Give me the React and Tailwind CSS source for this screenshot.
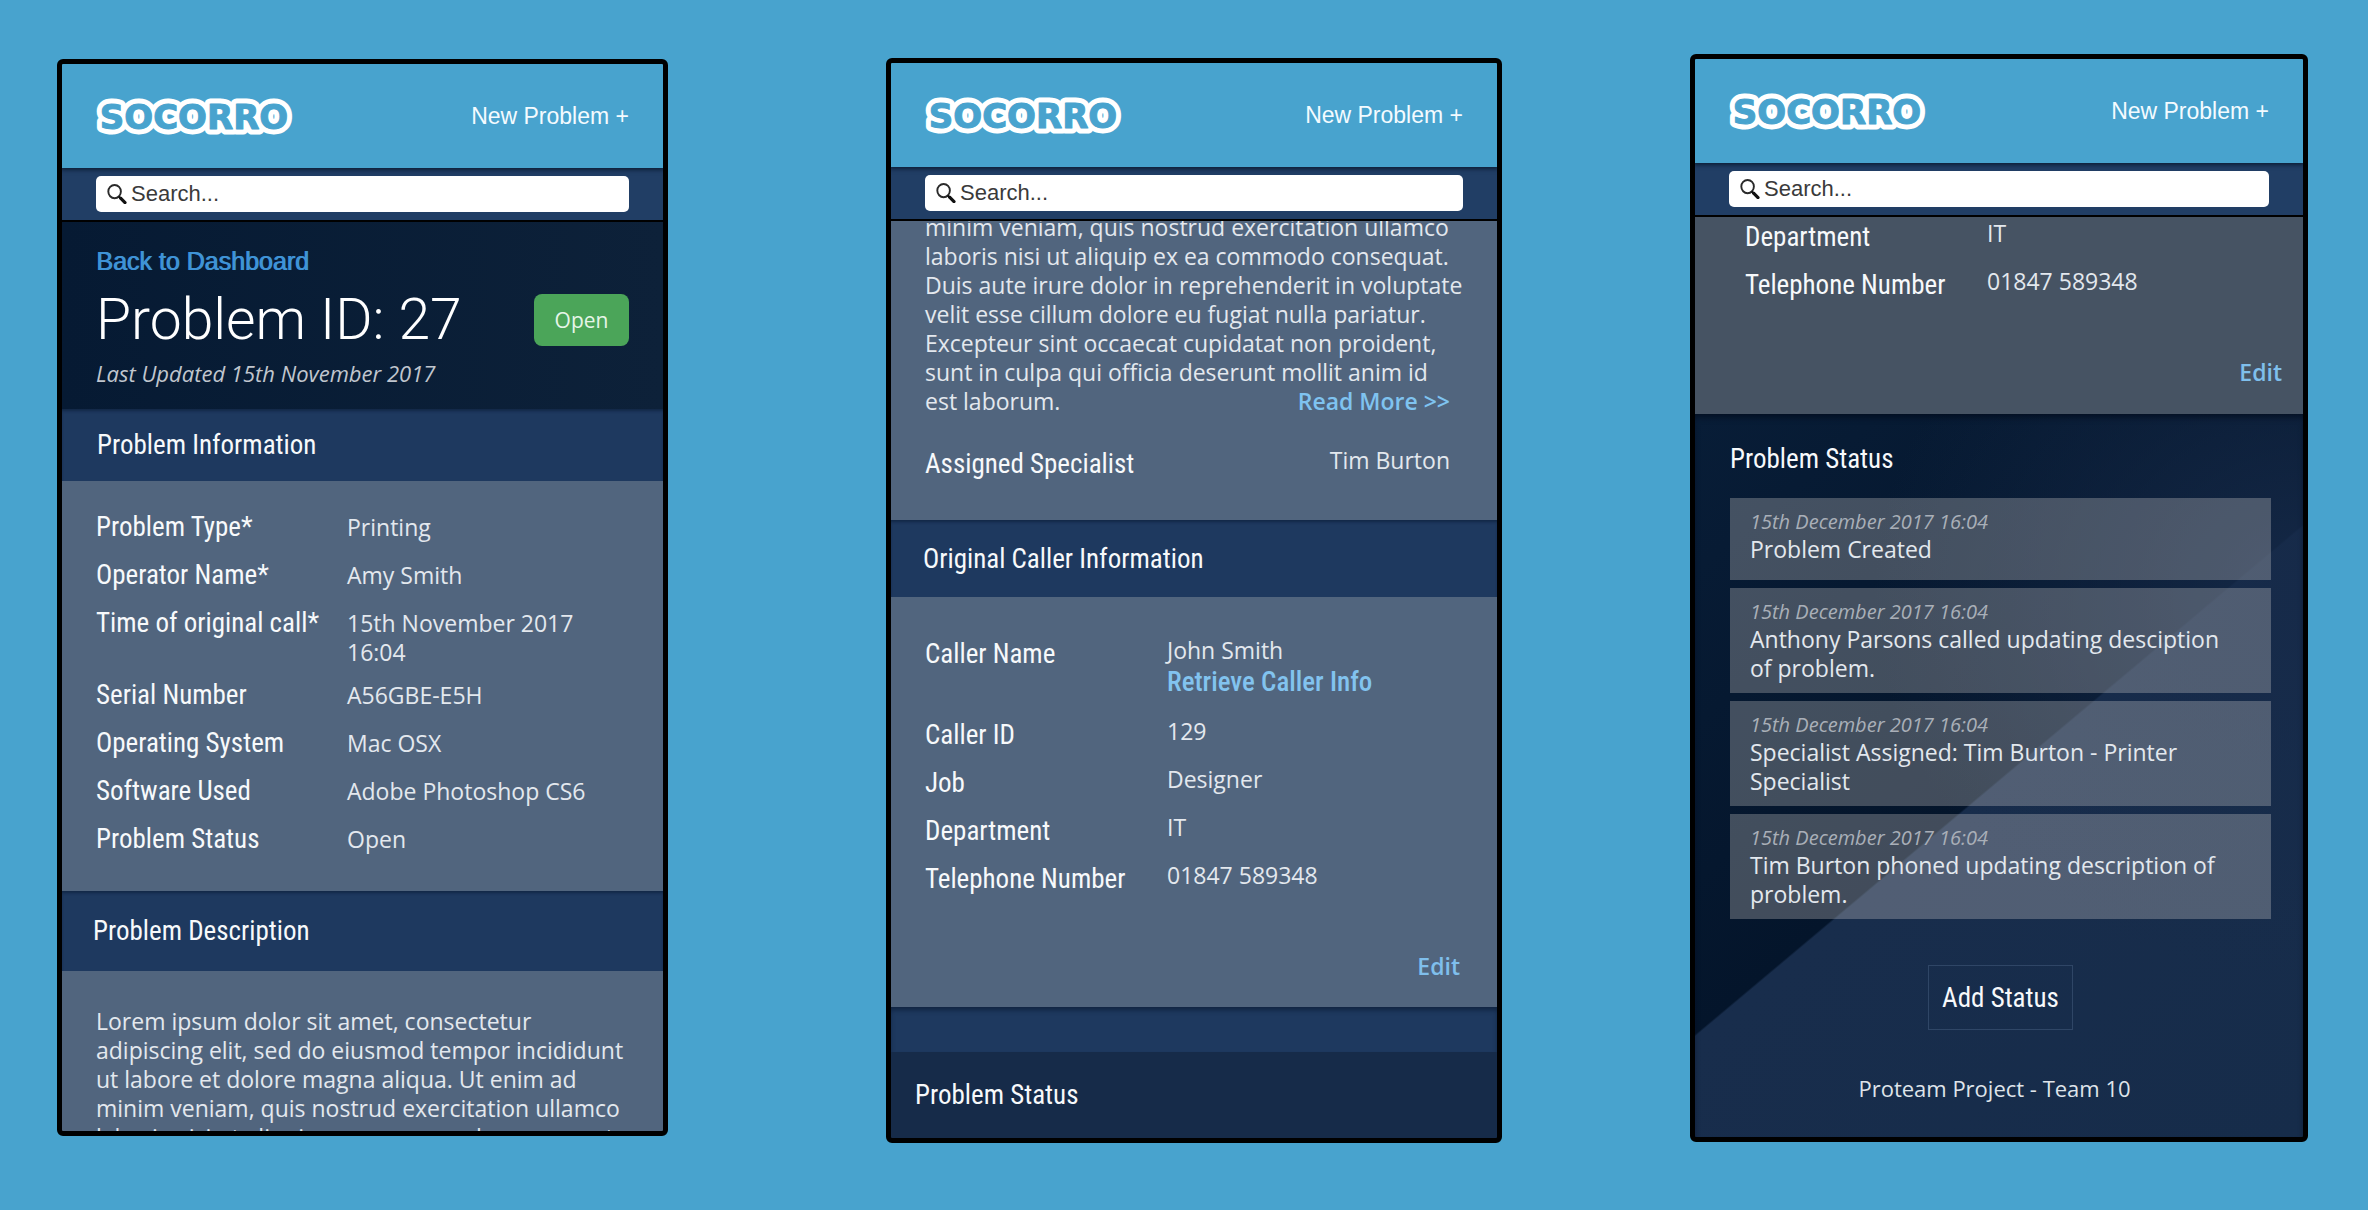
import React, { useId } from "react";

const problemRows = [
  ["Problem Type*", "Printing"],
  ["Operator Name*", "Amy Smith"],
  ["Time of original call*", "15th November 2017 16:04"],
  ["Serial Number", "A56GBE-E5H"],
  ["Operating System", "Mac OSX"],
  ["Software Used", "Adobe Photoshop CS6"],
  ["Problem Status", "Open"],
];

const callerRows = [
  ["Caller Name", "John Smith", "Retrieve Caller Info"],
  ["Caller ID", "129"],
  ["Job", "Designer"],
  ["Department", "IT"],
  ["Telephone Number", "01847 589348"],
];

const descriptionStart = [
  "Lorem ipsum dolor sit amet, consectetur",
  "adipiscing elit, sed do eiusmod tempor incididunt",
  "ut labore et dolore magna aliqua. Ut enim ad",
  "minim veniam, quis nostrud exercitation ullamco",
  "laboris nisi ut aliquip ex ea commodo consequat.",
];

const descriptionEnd = [
  "minim veniam, quis nostrud exercitation ullamco",
  "laboris nisi ut aliquip ex ea commodo consequat.",
  "Duis aute irure dolor in reprehenderit in voluptate",
  "velit esse cillum dolore eu fugiat nulla pariatur.",
  "Excepteur sint occaecat cupidatat non proident,",
  "sunt in culpa qui officia deserunt mollit anim id",
];

const statuses = [
  "Problem Created",
  "Anthony Parsons called updating desciption of problem.",
  "Specialist Assigned: Tim Burton - Printer Specialist",
  "Tim Burton phoned updating description of problem.",
];

const labelText =
  "font-['Roboto_Condensed','Roboto',sans-serif] text-[27px] leading-10 text-[#f7f9fb]";
const bodyText = "text-[23px] leading-[29px] text-[#e3e8ee]";

function Logo() {
  const wordId = useId();
  return (
    <svg viewBox="0 0 198 38" className="h-[38px] w-[198px]" role="img" aria-label="Socorro">
      <defs>
        <text
          id={wordId}
          x="98"
          y="32"
          textAnchor="middle"
          fontFamily="'DejaVu Sans', sans-serif"
          fontWeight="700"
          fontSize="34"
        >
          SOCORRO
        </text>
      </defs>
      <use href={"#" + wordId} fill="#fff" stroke="#fff" strokeWidth="11" strokeLinejoin="round" />
      <use
        href={"#" + wordId}
        fill="#48a3ce"
        stroke="#48a3ce"
        strokeWidth="1"
        strokeLinejoin="round"
      />
    </svg>
  );
}

function SearchIcon() {
  return (
    <svg viewBox="0 0 20 20" className="size-5 shrink-0" fill="none" aria-hidden="true">
      <ellipse cx="7.6" cy="7.6" rx="6.3" ry="6.6" stroke="#2a2a2a" strokeWidth="1.9" />
      <path d="M11.6 12.4 14 15" stroke="#111" strokeWidth="2" />
      <path d="M13.6 14.2 18 18.6" stroke="#111" strokeWidth="3.2" strokeLinecap="round" />
    </svg>
  );
}

function TopBar({ id }) {
  return (
    <>
      <header className="relative flex h-[104px] shrink-0 items-center justify-between bg-[#48a3ce] px-[34px] shadow-[0_1px_4px_1px_rgba(5,20,40,0.75)]">
        <Logo />
        <a
          href="#new"
          className="font-['Liberation_Sans',sans-serif] text-[23px] leading-7 text-[#f4fbff]"
        >
          New Problem +
        </a>
      </header>
      <div className="shrink-0 border-b-2 border-black bg-[#213e65] px-[34px] py-2">
        <label
          htmlFor={id}
          className="flex h-9 items-center gap-1 rounded-[5px] bg-white pr-2 pl-[11px]"
        >
          <SearchIcon />
          <input
            id={id}
            type="search"
            aria-label="Search"
            placeholder="Search..."
            className="w-full min-w-0 bg-transparent font-['Liberation_Sans',sans-serif] text-[22px] leading-7 text-[#333] outline-none placeholder:text-[#3a3a3a]"
          />
        </label>
      </div>
    </>
  );
}

function Phone({ id, className, children }) {
  return (
    <section
      className={
        "flex min-h-0 min-w-0 flex-col overflow-hidden rounded-md border-[5px] border-black bg-black " +
        className
      }
    >
      <TopBar id={id} />
      <div className="flex min-h-0 grow flex-col overflow-hidden">{children}</div>
    </section>
  );
}

function SectionHead({ className, children }) {
  return (
    <div
      className={
        "flex shrink-0 items-center bg-[#1e395f] shadow-[inset_0_3px_3px_-1px_rgba(6,22,45,0.5)] " +
        className
      }
    >
      <h2 className={labelText}>{children}</h2>
    </div>
  );
}

function CallerList({ rows }) {
  return (
    <dl className="grid grid-cols-[242px_1fr] items-start gap-y-2">
      {rows.map(([label, value, action]) => (
        <React.Fragment key={label}>
          <dt className={labelText}>{label}</dt>
          <dd className={"pt-0.5 " + bodyText}>
            {value}
            {action && (
              <a
                href="#caller"
                className="block pb-2 font-['Roboto_Condensed','Roboto',sans-serif] text-[27px] leading-[34px] font-medium text-[#82c3ef]"
              >
                {action}
              </a>
            )}
          </dd>
        </React.Fragment>
      ))}
    </dl>
  );
}

function EditLink() {
  return (
    <a
      href="#edit"
      className="mt-[53px] block text-right text-[23px] leading-[29px] font-semibold text-[#7fbfec]"
    >
      Edit
    </a>
  );
}

function OverviewPhone() {
  return (
    <Phone id="search-overview" className="col-start-2 mt-[59px] mb-[74px]">
      <div className="shrink-0 bg-linear-to-r from-[#061a33] to-[#0d2139] px-[34px] pt-6 pb-[21px]">
        <a
          href="#dashboard"
          className="block font-['Liberation_Sans',sans-serif] text-[25px] leading-[30px] text-[#3f93d6] [text-shadow:1px_0_0_#3f93d6]"
        >
          Back to Dashboard
        </a>
        <div className="mt-[14px] flex items-center justify-between">
          <h1 className="font-['Roboto',sans-serif] text-[57px] leading-[60px] font-light whitespace-nowrap text-white">
            Problem ID: 27
          </h1>
          <button
            type="button"
            className="h-[52px] w-[95px] rounded-lg bg-[#4ba559] text-[21px] leading-7 text-[#e6f5e8]"
          >
            Open
          </button>
        </div>
        <p className="mt-2 text-[22px] leading-[30px] text-[#c0c6ce] italic">
          Last Updated 15th November 2017
        </p>
      </div>

      <SectionHead className="h-[72px] pl-[35px]">Problem Information</SectionHead>
      <dl className="grid shrink-0 grid-cols-[251px_1fr] items-baseline gap-y-2 bg-[#51657e] pt-[26px] pr-16 pb-8 pl-[34px]">
        {problemRows.map(([label, value]) => (
          <React.Fragment key={label}>
            <dt className={labelText}>{label}</dt>
            <dd className={bodyText}>{value}</dd>
          </React.Fragment>
        ))}
      </dl>

      <SectionHead className="h-20 pl-[31px]">Problem Description</SectionHead>
      <p className={"grow bg-[#51657e] pt-9 pl-[34px] whitespace-nowrap " + bodyText}>
        {descriptionStart.map((line) => (
          <span key={line} className="block">
            {line}
          </span>
        ))}
      </p>
    </Phone>
  );
}

function CallerPhone() {
  return (
    <Phone id="search-caller" className="col-start-4 mt-[58px] mb-[67px]">
      <div className="-mt-2 shrink-0 bg-[#51657e] pr-[47px] pb-9 pl-[34px]">
        <p className={"whitespace-nowrap " + bodyText}>
          {descriptionEnd.map((line) => (
            <span key={line} className="block">
              {line}
            </span>
          ))}
        </p>
        <div className={"flex justify-between " + bodyText}>
          <span>est laborum.</span>
          <a href="#more" className="font-semibold text-[#7fc3f0]">
            Read More &gt;&gt;
          </a>
        </div>
        <div className="mt-7 flex items-start justify-between">
          <h3 className={labelText}>Assigned Specialist</h3>
          <span className={"pt-0.5 " + bodyText}>Tim Burton</span>
        </div>
      </div>

      <SectionHead className="h-[77px] pl-8">Original Caller Information</SectionHead>
      <div className="shrink-0 bg-[#51657e] pt-[37px] pr-[37px] pb-[26px] pl-[34px]">
        <CallerList rows={callerRows} />
        <EditLink />
      </div>

      <div className="h-[45px] shrink-0 bg-[#1e395f] shadow-[inset_0_4px_5px_-1px_rgba(6,22,45,0.6)]" />
      <div className="flex grow items-center bg-[#162b49] pl-6">
        <h2 className={labelText}>Problem Status</h2>
      </div>
    </Phone>
  );
}

function StatusPhone() {
  return (
    <Phone id="search-status" className="col-start-6 mt-[54px] mb-[68px]">
      <div className="shrink-0 bg-[#465363] pr-[21px] pb-[27px] pl-[50px]">
        <CallerList rows={callerRows.slice(3)} />
        <EditLink />
      </div>

      <div className="flex grow flex-col bg-[radial-gradient(at_100%_25%,rgba(22,42,73,0.95),transparent_50%),linear-gradient(140deg,#081d37_0%,#04152b_50.3%,#182d4c_50.5%,#162c4a_100%)] pt-[25px] pr-8 pl-[35px] shadow-[inset_0_5px_6px_-2px_rgba(2,10,25,0.7)]">
        <h2 className={labelText}>Problem Status</h2>
        <ul className="mt-[19px] flex flex-col gap-2">
          {statuses.map((text) => (
            <li
              key={text}
              className="min-h-[82px] bg-[rgba(250,245,235,0.25)] pt-[11px] pr-8 pb-[10px] pl-5"
            >
              <time className="block text-[20px] leading-[26px] text-[#a9afb8] italic">
                15th December 2017 16:04
              </time>
              <p className={bodyText}>{text}</p>
            </li>
          ))}
        </ul>
        <button
          type="button"
          className={
            "mt-[46px] h-[65px] w-[145px] self-center border border-[#2f4666] whitespace-nowrap " +
            labelText
          }
        >
          Add Status
        </button>
        <footer className="mt-11 pr-3 text-center text-[22px] leading-[29px] text-[#dfe4ea]">
          Proteam Project - Team 10
        </footer>
      </div>
    </Phone>
  );
}

export default function App() {
  return (
    <main className="grid h-screen grid-cols-[57fr_611fr_218fr_616fr_188fr_618fr_60fr] grid-rows-[minmax(0,1fr)] bg-[#48a3ce] font-['Open_Sans',sans-serif]">
      <OverviewPhone />
      <CallerPhone />
      <StatusPhone />
    </main>
  );
}
